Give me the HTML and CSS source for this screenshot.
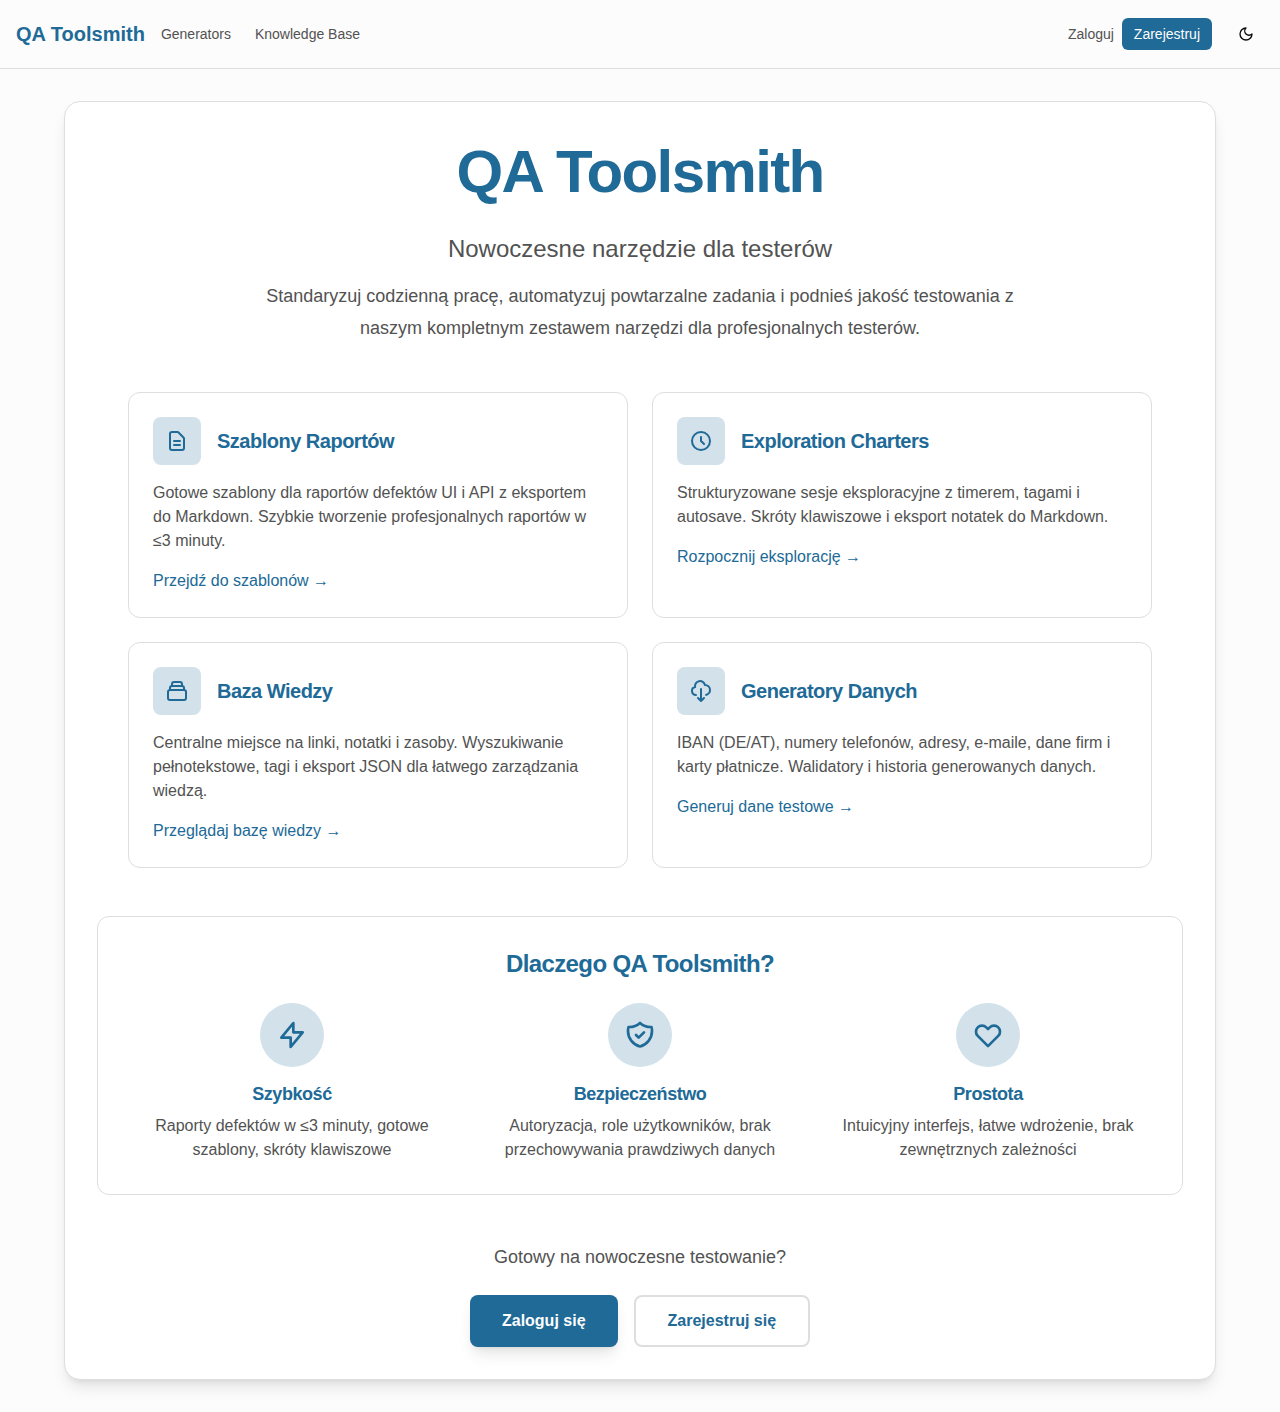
FILE: index.html
```html
<!DOCTYPE html>
<html lang="pl">
<head>
<meta charset="utf-8">
<title>QA Toolsmith</title>
<link rel="stylesheet" href="styles.css">
</head>
<body>
<header class="topbar">
  <a class="brand" href="#">QA Toolsmith</a>
  <nav class="nav">
    <a href="#">Generators</a>
    <a href="#">Knowledge Base</a>
  </nav>
  <div class="account">
    <a class="login" href="#">Zaloguj</a>
    <a class="register" href="#">Zarejestruj</a>
  </div>
  <button class="theme-toggle" aria-label="Motyw">
    <svg class="icon icon-sm" viewBox="0 0 24 24"><path d="M12 3a6 6 0 0 0 9 9 9 9 0 1 1-9-9Z"/></svg>
  </button>
</header>
<main class="page">
  <div class="panel">
    <section class="hero">
      <h1>QA Toolsmith</h1>
      <p class="tagline">Nowoczesne narzędzie dla testerów</p>
      <p class="lead">Standaryzuj codzienną pracę, automatyzuj powtarzalne zadania i podnieś jakość testowania z naszym kompletnym zestawem narzędzi dla profesjonalnych testerów.</p>
    </section>

    <section class="modules">
      <article class="card">
        <div class="card-head">
          <span class="tile"><svg class="icon" viewBox="0 0 24 24"><path d="M9 12h6m-6 4h6m2 5H7a2 2 0 01-2-2V5a2 2 0 012-2h5.586a1 1 0 01.707.293l5.414 5.414a1 1 0 01.293.707V19a2 2 0 01-2 2z"/></svg></span>
          <h3>Szablony Raportów</h3>
        </div>
        <p>Gotowe szablony dla raportów defektów UI i API z eksportem do Markdown. Szybkie tworzenie profesjonalnych raportów w ≤3 minuty.</p>
        <a href="#">Przejdź do szablonów <span class="arrow">→</span></a>
      </article>
      <article class="card">
        <div class="card-head">
          <span class="tile"><svg class="icon" viewBox="0 0 24 24"><path d="M12 8v4l3 3m6-3a9 9 0 11-18 0 9 9 0 0118 0z"/></svg></span>
          <h3>Exploration Charters</h3>
        </div>
        <p>Strukturyzowane sesje eksploracyjne z timerem, tagami i autosave. Skróty klawiszowe i eksport notatek do Markdown.</p>
        <a href="#">Rozpocznij eksplorację <span class="arrow">→</span></a>
      </article>
      <article class="card">
        <div class="card-head">
          <span class="tile"><svg class="icon" viewBox="0 0 24 24"><path d="M19 11H5m14 0a2 2 0 012 2v6a2 2 0 01-2 2H5a2 2 0 01-2-2v-6a2 2 0 012-2m14 0V9a2 2 0 00-2-2M5 11V9a2 2 0 012-2m0 0V5a2 2 0 012-2h6a2 2 0 012 2v2M7 7h10"/></svg></span>
          <h3>Baza Wiedzy</h3>
        </div>
        <p>Centralne miejsce na linki, notatki i zasoby. Wyszukiwanie pełnotekstowe, tagi i eksport JSON dla łatwego zarządzania wiedzą.</p>
        <a href="#">Przeglądaj bazę wiedzy <span class="arrow">→</span></a>
      </article>
      <article class="card">
        <div class="card-head">
          <span class="tile"><svg class="icon" viewBox="0 0 24 24"><path d="M7 16a4 4 0 01-.88-7.903A5 5 0 1115.9 6L16 6a5 5 0 011 9.9M9 19l3 3m0 0l3-3m-3 3V10"/></svg></span>
          <h3>Generatory Danych</h3>
        </div>
        <p>IBAN (DE/AT), numery telefonów, adresy, e-maile, dane firm i karty płatnicze. Walidatory i historia generowanych danych.</p>
        <a href="#">Generuj dane testowe <span class="arrow">→</span></a>
      </article>
    </section>

    <section class="why">
      <h2>Dlaczego QA Toolsmith?</h2>
      <div class="benefits">
        <div class="benefit">
          <span class="disc"><svg class="icon icon-lg" viewBox="0 0 24 24"><path d="M13 10V3L4 14h7v7l9-11h-7z"/></svg></span>
          <h3>Szybkość</h3>
          <p>Raporty defektów w ≤3 minuty, gotowe szablony, skróty klawiszowe</p>
        </div>
        <div class="benefit">
          <span class="disc"><svg class="icon icon-lg" viewBox="0 0 24 24"><path d="M9 12l2 2 4-4m5.618-4.016A11.955 11.955 0 0112 2.944a11.955 11.955 0 01-8.618 3.04A12.02 12.02 0 003 9c0 5.591 3.824 10.29 9 11.622 5.176-1.332 9-6.03 9-11.622 0-1.042-.133-2.052-.382-3.016z"/></svg></span>
          <h3>Bezpieczeństwo</h3>
          <p>Autoryzacja, role użytkowników, brak przechowywania prawdziwych danych</p>
        </div>
        <div class="benefit">
          <span class="disc"><svg class="icon icon-lg" viewBox="0 0 24 24"><path d="M4.318 6.318a4.5 4.5 0 000 6.364L12 20.364l7.682-7.682a4.5 4.5 0 00-6.364-6.364L12 7.636l-1.318-1.318a4.5 4.5 0 00-6.364 0z"/></svg></span>
          <h3>Prostota</h3>
          <p>Intuicyjny interfejs, łatwe wdrożenie, brak zewnętrznych zależności</p>
        </div>
      </div>
    </section>

    <section class="cta">
      <p>Gotowy na nowoczesne testowanie?</p>
      <div class="cta-actions">
        <a class="btn btn-primary" href="#">Zaloguj się</a>
        <a class="btn btn-outline" href="#">Zarejestruj się</a>
      </div>
    </section>
  </div>
</main>
</body>
</html>
```
FILE: styles.css
```css
:root {
  --primary: #206a97;
  --tint: #d2e1ea;
  --text: #525252;
  --border: #dedede;
}
* { box-sizing: border-box; margin: 0; padding: 0; }
body {
  background: #fcfcfc;
  color: var(--text);
  font: 16px/24px "Liberation Sans", Arial, sans-serif;
}
a { color: inherit; text-decoration: none; }
h1, h2, h3 {
  color: var(--primary);
  font-weight: 700;
  line-height: 1.25;
  letter-spacing: -0.025em;
}
.icon {
  display: block;
  width: 24px;
  height: 24px;
  fill: none;
  stroke: currentColor;
  stroke-width: 2;
  stroke-linecap: round;
  stroke-linejoin: round;
}
.icon-sm { width: 16px; height: 16px; }
.icon-lg { width: 32px; height: 32px; }

.topbar {
  display: flex;
  align-items: center;
  height: 69px;
  padding: 0 16px;
  border-bottom: 1px solid var(--border);
  font-size: 14px;
  line-height: 20px;
}
.brand {
  margin-right: 16px;
  color: var(--primary);
  font-size: 20px;
  font-weight: 700;
  line-height: 28px;
}
.nav { display: flex; gap: 24px; }
.account { display: flex; align-items: center; gap: 8px; margin-left: auto; }
.register {
  padding: 6px 12px;
  border-radius: 6px;
  background: var(--primary);
  color: #fcfcfc;
}
.theme-toggle {
  display: grid;
  place-items: center;
  width: 36px;
  height: 36px;
  margin-left: 16px;
  border: 0;
  background: none;
  color: #0a0a0a;
}

.page { padding: 32px 64px; }
.panel {
  padding: 32px;
  border: 1px solid var(--border);
  border-radius: 16px;
  background: #fff;
  box-shadow: 0 10px 15px -3px rgba(0, 0, 0, .1), 0 4px 6px -4px rgba(0, 0, 0, .1);
}
.hero { margin-bottom: 48px; text-align: center; }
.hero h1 { margin-bottom: 24px; font-size: 60px; letter-spacing: -0.027em; }
.tagline { margin-bottom: 16px; font-size: 24px; line-height: 32px; }
.lead { max-width: 768px; margin: 0 auto; font-size: 18px; line-height: 1.75; }

.modules {
  display: grid;
  grid-template-columns: 1fr 1fr;
  gap: 24px;
  max-width: 1024px;
  margin: 0 auto 48px;
}
.card {
  padding: 24px;
  border: 1px solid var(--border);
  border-radius: 12px;
}
.card-head { display: flex; align-items: center; gap: 16px; margin-bottom: 16px; }
.card-head h3 { font-size: 20px; }
.card p { margin-bottom: 16px; }
.card > a { display: block; color: var(--primary); }
.arrow { font-family: "Liberation Serif", serif; line-height: 1; }
.tile, .disc {
  display: grid;
  place-items: center;
  background: var(--tint);
  color: var(--primary);
}
.tile { width: 48px; height: 48px; border-radius: 8px; }

.why {
  margin-bottom: 48px;
  padding: 32px;
  border: 1px solid var(--border);
  border-radius: 12px;
  text-align: center;
}
.why h2 { margin-bottom: 24px; font-size: 24px; }
.benefits { display: grid; grid-template-columns: repeat(3, 1fr); gap: 24px; }
.disc { width: 64px; height: 64px; margin: 0 auto 16px; border-radius: 50%; }
.benefit h3 { margin-bottom: 8px; font-size: 18px; }

.cta { text-align: center; }
.cta > p { margin-bottom: 24px; font-size: 18px; line-height: 28px; }
.cta-actions { display: flex; justify-content: center; gap: 16px; }
.btn { border-radius: 8px; font-weight: 700; }
.btn-primary {
  padding: 14px 32px;
  background: var(--primary);
  color: #fcfcfc;
  box-shadow: 0 10px 15px -3px rgba(0, 0, 0, .1), 0 4px 6px -4px rgba(0, 0, 0, .1);
}
.btn-outline {
  padding: 12px 32px;
  border: 2px solid var(--border);
  color: var(--primary);
}
```
